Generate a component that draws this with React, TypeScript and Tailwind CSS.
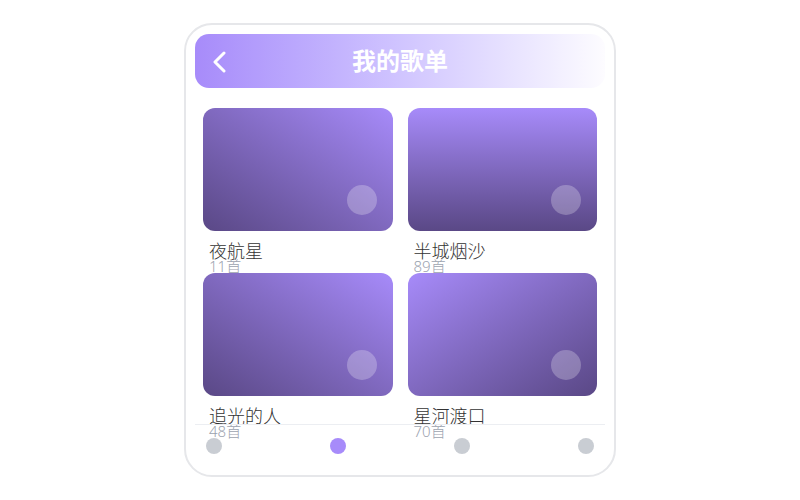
import React from "react";

type Playlist = { name: string; count: number; gradient: string };

const PLAYLISTS: Playlist[] = [
  { name: "夜航星", count: 11, gradient: "bg-gradient-to-tr from-[#5a4886] to-[#a78bfa]" },
  { name: "半城烟沙", count: 89, gradient: "bg-gradient-to-b from-[#a78bfa] to-[#5a4886]" },
  { name: "追光的人", count: 48, gradient: "bg-gradient-to-tr from-[#5a4886] to-[#a78bfa]" },
  { name: "星河渡口", count: 70, gradient: "bg-gradient-to-br from-[#a78bfa] to-[#5a4886]" },
];

const PlaylistCard = ({ item }: { item: Playlist }) => (
  <div className="flex flex-col">
    <div className={`relative h-[123px] rounded-[12px] ${item.gradient}`}>
      <div className="absolute bottom-4 right-4 h-[30px] w-[30px] rounded-full bg-white/25" />
    </div>
    <div className="mt-[11px] px-[6px] text-[18px] font-light leading-[18px] text-[#333]">{item.name}</div>
    <div className="px-[6px] text-[15px] font-light leading-[13px] text-[#9ca3af]">{item.count}首</div>
  </div>
);

export default function App() {
  return (
    <div
      className="flex h-[500px] w-full items-center justify-center bg-white"
      style={{ fontFamily: '"Noto Sans", "Noto Sans CJK SC", sans-serif' }}
    >
      <div className="flex h-[454px] w-[432px] flex-col rounded-[28px] border-2 border-[#e6e7ea] p-[9px]">
        <header className="relative flex h-[54px] shrink-0 items-center justify-center rounded-[14px] bg-gradient-to-r from-[#a78bfa] to-[#fdfcff]">
          <svg
            className="absolute left-[17px] top-[17px]"
            width="16"
            height="22"
            viewBox="0 0 16 22"
            fill="none"
            stroke="white"
            strokeWidth="3"
            strokeLinecap="round"
            strokeLinejoin="round"
          >
            <polyline points="12,2 3,11 12,20" />
          </svg>
          <h1 className="text-[24px] font-bold text-white">我的歌单</h1>
        </header>

        <main className="min-h-0 flex-1 px-2 pt-5">
          <div className="grid grid-cols-2 gap-x-[15px]">
            {PLAYLISTS.map((p) => (
              <PlaylistCard key={p.name} item={p} />
            ))}
          </div>
        </main>

        <nav className="flex h-[42px] shrink-0 items-center justify-between border-t border-[#eceef2] px-[11px]">
          <span className="h-4 w-4 rounded-full bg-[#c9cdd3]" />
          <span className="h-4 w-4 rounded-full bg-[#a78bfa]" />
          <span className="h-4 w-4 rounded-full bg-[#c9cdd3]" />
          <span className="h-4 w-4 rounded-full bg-[#c9cdd3]" />
        </nav>
      </div>
    </div>
  );
}
